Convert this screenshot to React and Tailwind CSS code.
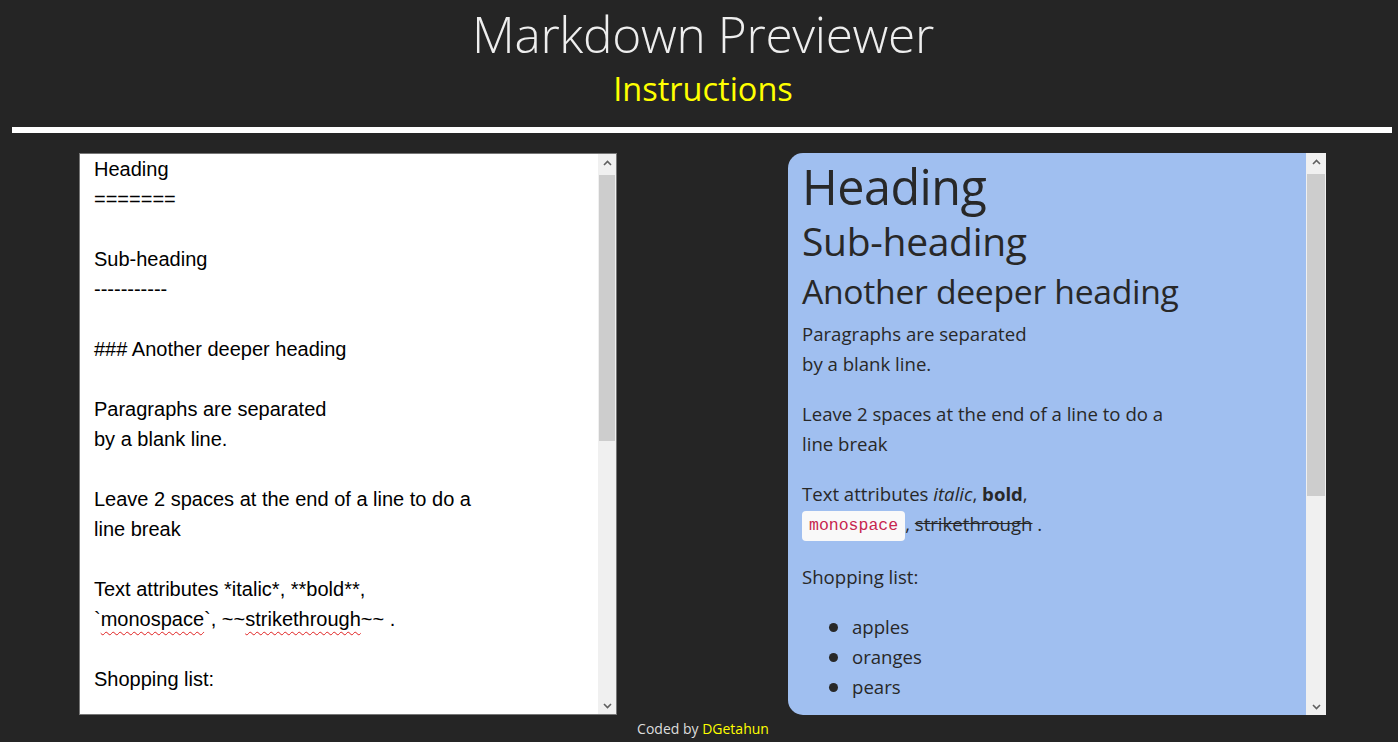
import React from "react";

const editorLines = [
  "Heading",
  "=======",
  "",
  "Sub-heading",
  "-----------",
  "",
  "### Another deeper heading",
  "",
  "Paragraphs are separated",
  "by a blank line.",
  "",
  "Leave 2 spaces at the end of a line to do a",
  "line break",
  "",
  "Text attributes *italic*, **bold**,",
  null,
  "",
  "Shopping list:",
];

const Chevron = ({ down }) => (
  <svg width="9" height="6" viewBox="0 0 9 6" className="block">
    <path
      d={down ? "M1 1 L4.5 4.5 L8 1" : "M1 5 L4.5 1.5 L8 5"}
      fill="none"
      stroke="#606060"
      strokeWidth="1.6"
    />
  </svg>
);

// fake windows-style scrollbar
const ScrollBar = ({ width, thumbTop, thumbHeight }) => (
  <div className={`relative h-full shrink-0 bg-[#f0f0f0] ${width}`}>
    <div className="absolute top-0 inset-x-0 h-[17px] flex items-center justify-center">
      <Chevron />
    </div>
    <div
      className="absolute inset-x-[1px] bg-[#cdcdcd]"
      style={{ top: thumbTop, height: thumbHeight }}
    />
    <div className="absolute bottom-0 inset-x-0 h-[17px] flex items-center justify-center">
      <Chevron down />
    </div>
  </div>
);

const Editor = () => (
  <div className="w-[538px] h-[562px] flex bg-white border border-[#767676] overflow-hidden">
    <div className="flex-1 pl-[14px] text-[20px] leading-[30px] text-black font-['Liberation_Sans',Arial,sans-serif] whitespace-pre">
      {editorLines.map((line, i) =>
        line === null ? (
          <div key={i}>
            `
            <span className="underline decoration-wavy decoration-[#e02020] decoration-1 underline-offset-[5px]">
              monospace
            </span>
            `, ~~
            <span className="underline decoration-wavy decoration-[#e02020] decoration-1 underline-offset-[5px]">
              strikethrough
            </span>
            ~~ .
          </div>
        ) : (
          <div key={i} className="h-[30px]">
            {line}
          </div>
        )
      )}
    </div>
    <ScrollBar width="w-[18px]" thumbTop={21} thumbHeight={266} />
  </div>
);

const Preview = () => (
  <div className="w-[538px] h-[562px] flex bg-[#a0bff0] rounded-l-[15px] overflow-hidden">
    <div className="flex-1 pl-[14px] text-[#282828] font-['Open_Sans','Noto_Sans',sans-serif] overflow-hidden">
      <h1 className="pt-[6px] text-[48.5px] leading-[54px] tracking-[-0.5px]">Heading</h1>
      <h2 className="text-[39px] leading-[56px] tracking-[-0.3px]">Sub-heading</h2>
      <h3 className="text-[33.7px] leading-[44px] tracking-[-0.3px]">Another deeper heading</h3>
      <div className="text-[18.6px] leading-[30px]">
        <p className="mt-[6px]">
          Paragraphs are separated
          <br />
          by a blank line.
        </p>
        <p className="mt-[20px]">
          Leave 2 spaces at the end of a line to do a
          <br />
          line break
        </p>
        <p className="mt-[20px]">
          Text attributes <em>italic</em>, <strong>bold</strong>,
          <br />
          <code className="inline-block align-middle px-[7px] h-[30px] leading-[30px] rounded-[4px] bg-[#f9f9f9] text-[#c7254e] text-[16.5px] font-['Liberation_Mono','DejaVu_Sans_Mono',monospace]">
            monospace
          </code>
          , <del>strikethrough</del> .
        </p>
        <p className="mt-[21px]">Shopping list:</p>
        <ul className="mt-[20px] pl-[27px]">
          {["apples", "oranges", "pears"].map((item) => (
            <li key={item} className="flex items-center gap-[14px] h-[30px]">
              <span className="w-[9px] h-[9px] rounded-full bg-[#282828]" />
              <span>{item}</span>
            </li>
          ))}
        </ul>
      </div>
    </div>
    <ScrollBar width="w-[20px]" thumbTop={21} thumbHeight={322} />
  </div>
);

export default function App() {
  return (
    <div className="h-[742px] bg-[#252525] font-['Open_Sans','Noto_Sans',sans-serif]">
      <header className="text-center pl-[8px]">
        <h1 className="pt-[4px] text-[49.5px] leading-[60px] font-light text-[#eeeeee] tracking-[-0.3px]">
          Markdown Previewer
        </h1>
        <h2 className="text-[32.5px] leading-[50px] text-[#ffff00]">Instructions</h2>
      </header>
      <div className="ml-3 mr-[6px] mt-[13px] h-[6px] bg-white" />
      <main className="flex pl-[79px] gap-[171px] mt-[20px]">
        <Editor />
        <Preview />
      </main>
      <footer className="pl-[8px] pt-[2px] text-center text-[14px] leading-[24px] text-[#dddddd]">
        Coded by <span className="text-[#ffff00]">DGetahun</span>
      </footer>
    </div>
  );
}
